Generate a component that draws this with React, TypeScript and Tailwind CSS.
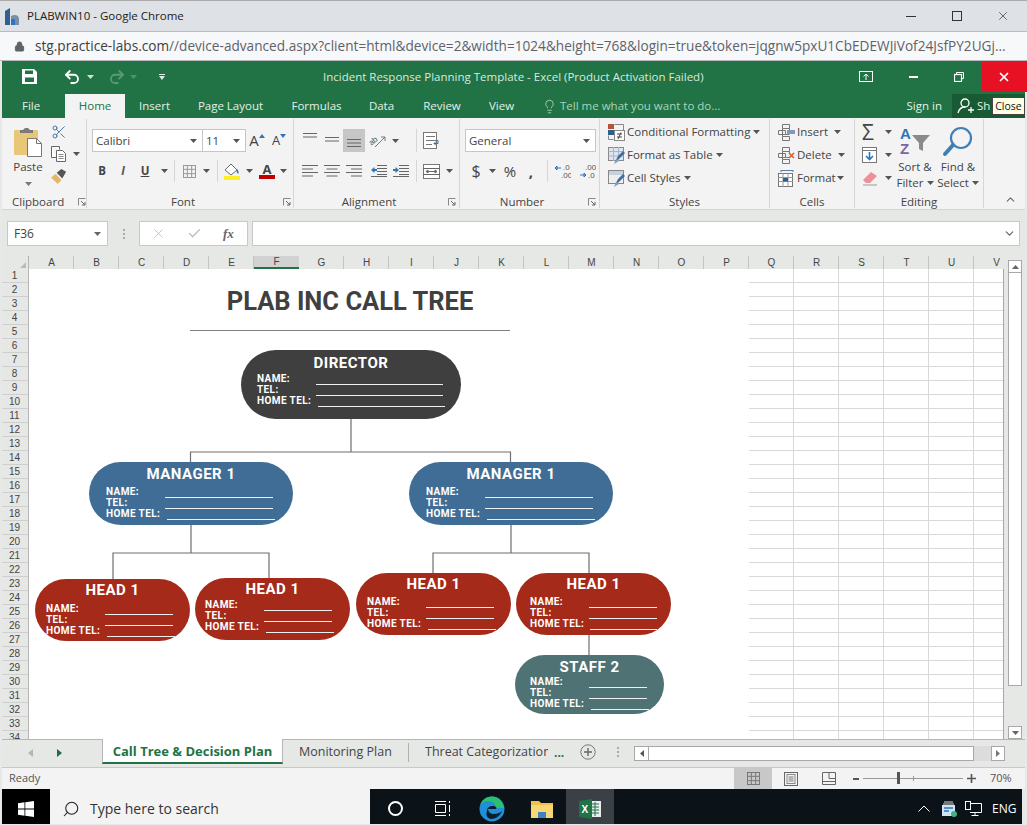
import React from "react";
import { Lock, Undo2, Redo2, Scissors, Lightbulb, Search, ChevronUp, ChevronDown, Check, X } from "lucide-react";

const Caret = ({ c = "#555" }: { c?: string }) => (
  <svg width="7" height="4" viewBox="0 0 7 4" className="shrink-0"><path d="M0 0h7L3.5 4z" fill={c} /></svg>
);

const Launcher = () => (
  <svg width="8" height="8" viewBox="0 0 8 8" className="shrink-0 ml-[4px]"><path d="M.5 7.5v-7h7" fill="none" stroke="#888" /><path d="M3 3l4 4M7 4v3H4" fill="none" stroke="#666" /></svg>
);

const Lines = ({ ws, x = "l" }: { ws: number[]; x?: string }) => (
  <svg width="16" height="14" viewBox="0 0 16 14">
    {ws.map((w, i) => {
      const y = 1.5 + i * 3.5;
      const x0 = x === "r" ? 16 - w : x === "c" ? (16 - w) / 2 : 0;
      return <path key={i} d={`M${x0} ${y}h${w}`} stroke="#666" />;
    })}
  </svg>
);

const Indent = ({ dir }: { dir: number }) => (
  <svg width="16" height="14" viewBox="0 0 16 14">
    <path d="M6 1.5h10M6 4.5h10M6 7.5h10M0 12.5h16M6 10.5h10" stroke="#666" />
    <path d={dir < 0 ? "M0 6l3.5-3v2H6v2H3.5v2z" : "M6 6L2.5 3v2H0v2h2.5v2z"} fill="#2f75b5" />
  </svg>
);

function Grid9({ s = 15, c = "#888" }: { s?: number; c?: string }) {
  const t = s / 3;
  return (
    <svg width={s} height={s} viewBox={`0 0 ${s} ${s}`}>
      <rect x=".5" y=".5" width={s - 1} height={s - 1} fill="none" stroke={c} />
      <path d={`M${t} 0V${s}M${2 * t} 0V${s}M0 ${t}H${s}M0 ${2 * t}H${s}`} stroke={c} />
    </svg>
  );
}

const StyleIcon = ({ kind }: { kind: number }) => (
  <svg width="17" height="17" viewBox="0 0 17 17" className="shrink-0">
    {kind === 0 ? (
      <>
        <rect x="0" y="0" width="6" height="5" fill="#b5533c" />
        <rect x="0" y="6" width="6" height="5" fill="#2f5f8f" />
        <path d="M6.5.5h9v6M.5 11.5v4h5" fill="none" stroke="#888" />
        <rect x="6.5" y="6.5" width="10" height="10" fill="#fff" stroke="#888" />
        <path d="M9 10h5M9 13h5M13 8.5l-3 6.5" stroke="#444" fill="none" />
      </>
    ) : (
      <>
        <rect x=".5" y=".5" width="15" height="13" fill={kind === 1 ? "#dfe5ee" : "#eee"} stroke="#888" />
        {kind === 1 && <path d="M.5 4.5h15M.5 9h15M5.5 0v14M10.5 0v14" stroke="#a9b4c4" />}
        {kind === 2 && <rect x="1" y="1" width="14" height="4" fill="#c6d0de" />}
        <path d="M7 15l3-6 5-5 2 2-5 5z" fill="#3f6f9f" />
        <path d="M6 17l2-5 3 2z" fill="#7ba3c7" />
      </>
    )}
  </svg>
);

const CellIcon = ({ kind }: { kind: number }) => (
  <svg width="18" height="17" viewBox="0 0 18 17" className="shrink-0">
    {kind === 2 ? (
      <>
        <path d="M3 .5h12M3 0v2M15 0v2" stroke="#5a7fa8" />
        <rect x=".5" y="3.5" width="14" height="13" fill="#fff" stroke="#777" />
        <path d="M.5 7.5h14M.5 11.5h14M5 3v14M10 3v14" stroke="#999" />
        <rect x="5" y="8" width="5" height="3.5" fill="#2f5f8f" />
      </>
    ) : (
      <>
        <path d="M4.5.5h7v4h-7zM.5 6.5h7v4h-7zM4.5 12.5h7v4h-7zM4.5 4.5v8M11.5 4.5v2M7.5 10.5h4" fill="none" stroke="#777" />
        {kind === 0 ? (
          <path d="M9 7h8M9 9h8" stroke="#5a7fa8" strokeWidth="1.5" />
        ) : (
          <path d="M11 6l5 5M16 6l-5 5" stroke="#d9622b" strokeWidth="1.7" />
        )}
      </>
    )}
  </svg>
);

function Ribbon() {
  return (
    <div className="flex h-[92px] bg-[#f3f3f3] border-b border-[#d4d4d4] text-[11.5px] text-[#444] whitespace-nowrap shrink-0">
      {/* Clipboard */}
      <div className="flex flex-col w-[85px] border-r border-[#d6d6d6] my-[1px]">
        <div className="flex h-[76px]">
          <div className="w-[49px] flex flex-col items-center pt-[8px] pl-[3px]">
            <svg width="30" height="30" viewBox="0 0 30 30">
              <rect x="1" y="3" width="24" height="25" rx="1" fill="#e8c878" />
              <path d="M7 6V3h3l2-2h3l2 2h3v3z" fill="#7a7a7a" />
              <path d="M14.5 11.5h9l5 5v13h-14z" fill="#fff" stroke="#777" />
              <path d="M23.5 11.5v5h5" fill="none" stroke="#777" />
            </svg>
            <span className="mt-[2px] leading-[16px]">Paste</span>
            <div className="mt-[7px]"><Caret c="#777" /></div>
          </div>
          <div className="flex flex-col items-start pt-[5px]">
            <Scissors size={16} color="#3f6f9f" strokeWidth={1.4} />
            <div className="flex items-center gap-[6px] h-[18px] mt-[5px]">
              <svg width="16" height="16" viewBox="0 0 16 16"><path d="M.5.5h8v3M.5.5v11h5" fill="#fff" stroke="#666" /><path d="M5.5 4.5h6l3 3v8h-9z" fill="#fff" stroke="#666" /><path d="M7.5 8.5h5M7.5 10.5h5M7.5 12.5h5" stroke="#888" /></svg>
              <Caret />
            </div>
            <div className="mt-[6px]">
              <svg width="17" height="15" viewBox="0 0 18 16"><path d="M0 9l5-4 6 7-4 4z" fill="#e5b56a" /><path d="M6 4l5-4 5 3-4 7z" fill="#555" /></svg>
            </div>
          </div>
        </div>
        <div className="flex items-center h-[13px] pl-[10px]">
          <span className="w-[63px]">Clipboard</span>
          <Launcher />
        </div>
      </div>

      {/* Font */}
      <div className="flex flex-col w-[207px] border-r border-[#d6d6d6] my-[1px]">
        <div className="flex h-[76px] flex-col pl-[5px] pt-[10px]">
          <div className="flex items-center h-[23px]">
            <div className="w-[111px] h-[23px] flex items-center justify-between px-[3px] pr-[5px] bg-white border border-[#c6c6c6]"><span>Calibri</span><Caret /></div>
            <div className="w-[43px] h-[23px] flex items-center justify-between px-[3px] pr-[5px] bg-white border border-l-0 border-[#c6c6c6]"><span>11</span><Caret /></div>
            <div className="w-[22px] flex justify-center items-center text-[15px] leading-none">A<svg width="6" height="4" viewBox="0 0 6 4" className="mb-[10px]"><path d="M0 4l3-4 3 4z" fill="#2f75b5" /></svg></div>
            <div className="w-[22px] flex justify-center items-center text-[13px] leading-none">A<svg width="6" height="4" viewBox="0 0 6 4" className="mb-[10px]"><path d="M0 0l3 4 3-4z" fill="#2f75b5" /></svg></div>
          </div>
          <div className="flex items-center h-[22px] mt-[8px]">
            <div className="w-[20px] text-center font-bold">B</div>
            <div className="w-[22px] text-center italic font-bold text-[#555]">I</div>
            <div className="w-[22px] text-center font-bold underline">U</div>
            <div className="w-[14px] flex justify-center ml-[1px]"><Caret /></div>
            <div className="w-px h-[22px] bg-[#d6d6d6] ml-[3px]" />
            <div className="w-[28px] flex justify-center"><Grid9 s={13} c="#999" /></div>
            <div className="w-[6px] flex justify-center"><Caret /></div>
            <div className="w-px h-[22px] bg-[#d6d6d6] ml-[8px]" />
            <div className="w-[28px] flex justify-center">
              <svg width="18" height="18" viewBox="0 0 18 18"><path d="M2 8l6-6 6 6-6 5z" fill="#fff" stroke="#666" /><path d="M14 7c2 2 2 4 1 5-1-1-2-3-1-5z" fill="#2f75b5" /><rect x="1" y="14" width="16" height="4" fill="#ffee22" /></svg>
            </div>
            <div className="w-[6px] flex justify-center"><Caret /></div>
            <div className="w-[26px] flex flex-col items-center ml-[2px]">
              <span className="font-bold text-[13px] leading-[12px]">A</span>
              <div className="w-[16px] h-[4px] bg-[#c00000]" />
            </div>
            <div className="w-[6px] flex justify-center"><Caret /></div>
          </div>
        </div>
        <div className="flex items-center h-[13px]">
          <span className="w-[192px] text-center">Font</span>
          <Launcher />
        </div>
      </div>

      {/* Alignment */}
      <div className="flex flex-col w-[166px] border-r border-[#d6d6d6] my-[1px]">
        <div className="flex h-[76px] flex-col pl-[5px] pt-[10px]">
          <div className="flex items-center h-[23px]">
            <div className="w-[22px] flex justify-center pb-[4px]"><Lines ws={[14, 14]} x="c" /></div>
            <div className="w-[22px] flex justify-center pt-[4px]"><Lines ws={[14, 14]} x="c" /></div>
            <div className="w-[22px] h-[23px] flex justify-center items-end bg-[#c6c6c6]"><Lines ws={[14, 14, 14]} x="c" /></div>
            <div className="w-[26px] flex justify-center">
              <svg width="18" height="15" viewBox="0 0 18 15"><text x="0" y="10" fontSize="8" fill="#555" transform="rotate(-40 5 8)" fontFamily="Liberation Sans">ab</text><path d="M6 14L16 4M16 4l-4 0M16 4v4" stroke="#777" fill="none" /></svg>
            </div>
            <div className="w-[8px] flex justify-center"><Caret /></div>
            <div className="w-px h-[23px] bg-[#d6d6d6] ml-[17px]" />
            <div className="w-[29px] flex justify-center">
              <svg width="17" height="17" viewBox="0 0 17 17"><rect x=".5" y=".5" width="13" height="16" fill="#fff" stroke="#777" /><path d="M3 4.5h9M3 8.5h12M3 12.5h6" stroke="#777" /><path d="M15 8.5v3h-4M13 9.5l-2 2 2 2" stroke="#2f75b5" fill="none" /></svg>
            </div>
          </div>
          <div className="flex items-center h-[22px] mt-[8px]">
            <div className="w-[22px] flex justify-center"><Lines ws={[16, 11, 16, 11]} x="l" /></div>
            <div className="w-[22px] flex justify-center"><Lines ws={[16, 11, 16, 11]} x="c" /></div>
            <div className="w-[22px] flex justify-center"><Lines ws={[16, 11, 16, 11]} x="r" /></div>
            <div className="w-[22px] flex justify-center ml-[3px]"><Indent dir={-1} /></div>
            <div className="w-[22px] flex justify-center"><Indent dir={1} /></div>
            <div className="w-px h-[22px] bg-[#d6d6d6] ml-[4px]" />
            <div className="w-[29px] flex justify-center">
              <svg width="17" height="15" viewBox="0 0 17 15"><rect x=".5" y=".5" width="16" height="14" fill="#fff" stroke="#777" /><path d="M0 4.5h17M0 10.5h17M3 7.5h11M3 7.5l2-1.5v3zM14 7.5l-2-1.5v3z" stroke="#666" fill="none" /></svg>
            </div>
            <Caret />
          </div>
        </div>
        <div className="flex items-center h-[13px]">
          <span className="w-[150px] text-center">Alignment</span>
          <Launcher />
        </div>
      </div>

      {/* Number */}
      <div className="flex flex-col w-[140px] border-r border-[#d6d6d6] my-[1px]">
        <div className="flex h-[76px] flex-col pl-[5px] pt-[10px]">
          <div className="w-[131px] h-[23px] flex items-center justify-between px-[3px] pr-[5px] bg-white border border-[#c6c6c6]"><span>General</span><Caret /></div>
          <div className="flex items-center h-[22px] mt-[8px]">
            <div className="w-[22px] text-center text-[16px] leading-none">$</div>
            <div className="w-[8px] flex justify-center ml-[1px]"><Caret /></div>
            <div className="w-[28px] text-center text-[15px] leading-none font-medium">%</div>
            <div className="w-[14px] text-center font-bold text-[15px] leading-none">,</div>
            <div className="w-px h-[22px] bg-[#d6d6d6] ml-[9px]" />
            <div className="w-[30px] flex justify-center">
              <svg width="16" height="16" viewBox="0 0 16 16"><text x="8" y="7" fontSize="8" fill="#555" fontFamily="Liberation Sans">.0</text><text x="6" y="15" fontSize="8" fill="#555" fontFamily="Liberation Sans">.00</text><path d="M0 5h6M0 5l2-2v4z" stroke="#2f75b5" fill="none" /></svg>
            </div>
            <div className="w-[20px] flex justify-center">
              <svg width="16" height="16" viewBox="0 0 16 16"><text x="5" y="7" fontSize="8" fill="#555" fontFamily="Liberation Sans">.00</text><text x="8" y="15" fontSize="8" fill="#555" fontFamily="Liberation Sans">.0</text><path d="M0 12h6M6 12l-2-2v4z" stroke="#2f75b5" fill="none" /></svg>
            </div>
          </div>
        </div>
        <div className="flex items-center h-[13px]">
          <span className="w-[124px] text-center">Number</span>
          <Launcher />
        </div>
      </div>

      {/* Styles */}
      <div className="flex flex-col w-[170px] border-r border-[#d6d6d6] my-[1px]">
        <div className="flex h-[76px] flex-col pl-[8px] pt-[4px] gap-[5px]">
          <div className="flex items-center h-[18px] gap-[2px]"><StyleIcon kind={0} /><span className="mr-[1px]">Conditional Formatting</span><Caret /></div>
          <div className="flex items-center h-[18px] gap-[2px]"><StyleIcon kind={1} /><span className="mr-[1px]">Format as Table</span><Caret /></div>
          <div className="flex items-center h-[18px] gap-[2px]"><StyleIcon kind={2} /><span className="mr-[1px]">Cell Styles</span><Caret /></div>
        </div>
        <div className="h-[13px] flex items-center justify-center">Styles</div>
      </div>

      {/* Cells */}
      <div className="flex flex-col w-[85px] border-r border-[#d6d6d6] my-[1px]">
        <div className="flex h-[76px] flex-col pl-[8px] pt-[4px] gap-[5px]">
          <div className="flex items-center h-[18px]"><CellIcon kind={0} /><span className="ml-[1px] w-[37px]">Insert</span><Caret /></div>
          <div className="flex items-center h-[18px]"><CellIcon kind={1} /><span className="ml-[1px] w-[41px]">Delete</span><Caret /></div>
          <div className="flex items-center h-[18px]"><CellIcon kind={2} /><span className="ml-[1px] w-[40px]">Format</span><Caret /></div>
        </div>
        <div className="h-[13px] flex items-center justify-center">Cells</div>
      </div>

      {/* Editing */}
      <div className="flex flex-col w-[129px] border-r border-[#d6d6d6] my-[1px]">
        <div className="flex h-[76px] pl-[7px]">
          <div className="flex flex-col pt-[4px] gap-[5px] w-[35px] shrink-0">
            <div className="flex items-center h-[18px] gap-[6px]"><span className="text-[21px] leading-none w-[17px] text-[#444]">Σ</span><Caret /></div>
            <div className="flex items-center h-[18px] gap-[6px]">
              <svg width="17" height="17" viewBox="0 0 17 17"><rect x=".5" y=".5" width="14" height="15" fill="#fff" stroke="#777" /><path d="M0 3.5h15" stroke="#777" /><path d="M7.5 5v7M4 9l3.5 3.5L11 9" stroke="#2f75b5" strokeWidth="1.6" fill="none" /></svg>
              <Caret />
            </div>
            <div className="flex items-center h-[18px] gap-[6px]">
              <svg width="17" height="16" viewBox="0 0 17 16"><path d="M1 10l8-8 6 4-7 7H4z" fill="#ee8f9a" /><path d="M1 15h14" stroke="#999" /></svg>
              <Caret />
            </div>
          </div>
          <div className="w-[36px] shrink-0 flex flex-col items-center pt-[7px]">
            <svg width="32" height="32" viewBox="0 0 32 32">
              <text x="1" y="13" fontSize="15" fontWeight="700" fill="#2f75b5" fontFamily="Liberation Sans">A</text>
              <text x="1" y="28" fontSize="15" fontWeight="700" fill="#8064a2" fontFamily="Liberation Sans">Z</text>
              <path d="M13 9h18l-7 8v8l-4-2v-6z" fill="#8a8a8a" />
            </svg>
            <span className="leading-[16px] mt-[1px]">Sort &amp;</span>
            <span className="leading-[16px] flex items-center gap-[3px]">Filter<Caret /></span>
          </div>
          <div className="w-[50px] shrink-0 flex flex-col items-center pt-[6px]">
            <svg width="32" height="34" viewBox="0 0 32 34">
              <circle cx="19" cy="13" r="10" fill="none" stroke="#3f7fb5" strokeWidth="2.2" />
              <path d="M11 20L3 29" stroke="#3f7fb5" strokeWidth="4" strokeLinecap="round" />
            </svg>
            <span className="leading-[16px]">Find &amp;</span>
            <span className="leading-[16px] flex items-center gap-[3px]">Select<Caret /></span>
          </div>
        </div>
        <div className="h-[13px] flex items-center justify-center">Editing</div>
      </div>
      <div className="flex-1 flex items-end justify-end pb-[3px] pr-[8px]"><ChevronUp size={13} color="#666" strokeWidth={2} /></div>
    </div>
  );
}

function FormulaBar() {
  return (
    <div className="flex h-[46px] bg-[#e6e8e6] items-start pt-[11px] pl-[5px] text-[12px] text-[#444] shrink-0">
      <div className="w-[101px] h-[25px] bg-white border border-[#c8c8c8] flex items-center justify-between pl-[6px] pr-[6px]"><span>F36</span><Caret c="#666" /></div>
      <div className="w-[31px] h-[25px] flex flex-col items-center justify-center gap-[2px]">
        <div className="w-[2px] h-[2px] bg-[#aaa]" /><div className="w-[2px] h-[2px] bg-[#aaa]" /><div className="w-[2px] h-[2px] bg-[#aaa]" />
      </div>
      <div className="w-[109px] h-[25px] bg-white border border-[#c8c8c8] flex items-center pl-[11px]">
        <X size={15} color="#c4c4c4" strokeWidth={1.6} />
        <Check size={15} color="#c4c4c4" strokeWidth={2.4} className="ml-[21px]" />
        <span className="ml-[21px] italic font-bold text-[13px] text-[#666] font-['Liberation_Serif',serif]">fx</span>
      </div>
      <div className="w-[768px] ml-[4px] h-[25px] bg-white border border-[#c8c8c8] flex items-center justify-end pr-[3px]"><ChevronDown size={13} color="#666" strokeWidth={2.2} /></div>
    </div>
  );
}

const COLS = "ABCDEFGHIJKLMNOPQRSTUV".split("");

function ColHeaders() {
  return (
    <div className="flex h-[13px] bg-[#e6e8e6] text-[10px] leading-[13px] text-[#444] font-['Liberation_Sans',sans-serif] overflow-hidden">
      <div className="w-[27px] shrink-0 border-r border-[#b5b5b5] flex justify-end items-end pr-[2px] pb-[1px]">
        <svg width="6" height="6" viewBox="0 0 6 6"><path d="M6 0v6H0z" fill="#bbb" /></svg>
      </div>
      {COLS.map((c) => (
        <div key={c} className={c === "F" ? "w-[45px] shrink-0 text-center bg-[#d2d2d2] border-b-2 border-[#217346] leading-[11px]" : "w-[45px] shrink-0 text-center pl-px border-r border-[#c4c4c4]"}>{c}</div>
      ))}
    </div>
  );
}

type NodeProps = { cls: string; title: string; line: string; titleCls: string };

function Node({ cls, title, line, titleCls }: NodeProps) {
  const rows = ["NAME:", "TEL:", "HOME TEL:"];
  return (
    <div className={`absolute rounded-full text-white font-['Roboto',sans-serif] font-bold flex flex-col ${cls}`}>
      <div className={`text-center text-[15px] leading-[18px] tracking-[0.5px] ${titleCls}`}>{title}</div>
      <div className="flex flex-col">
        {rows.map((r, i) => (
          <div key={r} className="flex items-end h-[11px] text-[10px] leading-[11px] tracking-[0.4px]">
            <span className="w-[59px] whitespace-nowrap">{r}</span>
            <div className={`${line} h-[2px] border-b border-[#f0f0f0] mb-[-1px] ${i === 2 ? "ml-[2px]" : ""}`} />
          </div>
        ))}
      </div>
    </div>
  );
}

function Diagram() {
  return (
    <div className="relative w-[720px] h-[470px] bg-white shrink-0">
      <div className="absolute left-[161px] top-[17px] w-[320px] flex flex-col items-center font-['Roboto',sans-serif]">
        <div className="text-[25.5px] leading-[30px] font-bold text-[#404040] whitespace-nowrap">PLAB INC CALL TREE</div>
        <div className="w-[320px] h-[1px] bg-[#808080] mt-[14px]" />
      </div>
      <svg className="absolute left-0 top-0" width="720" height="470" viewBox="0 0 720 470" fill="none" stroke="#6f6f6f" strokeWidth="1.2">
        <path d="M322 150v33M161.500 193v-10h320v10" />
        <path d="M162 256v28M84 310v-26h156v25" />
        <path d="M482 256v28M404 304v-20h156v20" />
        <path d="M560 366v20" />
      </svg>
      <Node cls="left-[212px] top-[81px] w-[220px] h-[69px] bg-[#3f3f3f] px-[16px] pt-[4px]" title="DIRECTOR" titleCls="mb-[1px]" line="w-[127px]" />
      <Node cls="left-[60px] top-[193px] w-[204px] h-[63px] bg-[#3f6d96] px-[17px] pt-[3px]" title="MANAGER 1" titleCls="mb-[3px]" line="w-[108px]" />
      <Node cls="left-[380px] top-[193px] w-[204px] h-[63px] bg-[#3f6d96] px-[17px] pt-[3px]" title="MANAGER 1" titleCls="mb-[3px]" line="w-[108px]" />
      <Node cls="left-[6px] top-[310px] w-[155px] h-[62px] bg-[#a52a1a] px-[11px] pt-[2px]" title="HEAD 1" titleCls="mb-[4px]" line="w-[68px]" />
      <Node cls="left-[166px] top-[309px] w-[155px] h-[62px] bg-[#a52a1a] px-[10px] pt-[2px]" title="HEAD 1" titleCls="mb-[1px]" line="w-[68px]" />
      <Node cls="left-[327px] top-[304px] w-[155px] h-[62px] bg-[#a52a1a] px-[11px] pt-[2px]" title="HEAD 1" titleCls="mb-[3px]" line="w-[68px]" />
      <Node cls="left-[487px] top-[304px] w-[155px] h-[62px] bg-[#a52a1a] px-[14px] pt-[2px]" title="HEAD 1" titleCls="mb-[3px]" line="w-[68px]" />
      <Node cls="left-[486px] top-[386px] w-[149px] h-[59px] bg-[#4f7274] px-[15px] pt-[3px]" title="STAFF 2" titleCls="" line="w-[58px]" />
    </div>
  );
}

function Sheet() {
  const rows = Array.from({ length: 34 }, (_, i) => i + 1);
  return (
    <div className="flex h-[470px] overflow-hidden">
      <div className="w-[27px] shrink-0 bg-[#e6e8e6] border-r border-[#b5b5b5] overflow-hidden font-['Liberation_Sans',sans-serif] text-[10px] text-[#444]">
        {rows.map((r) => (
          <div key={r} className="h-[14px] leading-[14px] pr-[1px] text-center border-b border-[#cfcfcf]">{r}</div>
        ))}
      </div>
      <Diagram />
      <div className="w-[255px] shrink-0 bg-white border-r border-[#a8a8a8] bg-[repeating-linear-gradient(to_right,transparent_0,transparent_44px,#d9d9d9_44px,#d9d9d9_45px),repeating-linear-gradient(to_bottom,transparent_0,transparent_13px,#d9d9d9_13px,#d9d9d9_14px)]" />
    </div>
  );
}

function VScroll() {
  return (
    <div className="w-[21px] shrink-0 flex flex-col bg-[#e6e8e6] pl-[4px] pt-[4px]">
      <div className="h-[13px] w-[14px] bg-white border border-[#a8a8a8] flex items-center justify-center"><svg width="7" height="4" viewBox="0 0 7 4"><path d="M0 4h7L3.5 0z" fill="#666" /></svg></div>
      <div className="h-[413px] w-[14px] bg-white border border-t-0 border-[#a8a8a8]" />
      <div className="flex-1 w-[14px]" />
      <div className="h-[13px] w-[14px] bg-white border border-[#a8a8a8] flex items-center justify-center"><Caret c="#666" /></div>
    </div>
  );
}

function SheetTabs() {
  return (
    <div className="flex h-[28px] bg-[#e6e8e6] border-t border-[#b5b5b5] text-[12.5px] text-[#444] whitespace-nowrap shrink-0">
      <div className="w-[100px] flex items-center pl-[26px] pb-[2px] shrink-0">
        <svg width="5" height="8" viewBox="0 0 5 8"><path d="M5 0v8L0 4z" fill="#b5b5b5" /></svg>
        <svg width="5" height="8" viewBox="0 0 5 8" className="ml-[24px]"><path d="M0 0v8l5-4z" fill="#1f6b46" /></svg>
      </div>
      <div className="w-[181px] h-[25px] mt-[-1px] pt-[3px] bg-white border-x border-[#b5b5b5] border-b-[2.5px] border-b-[#217346] flex items-center justify-center font-bold text-[13px] text-[#217346] shrink-0">Call Tree &amp; Decision Plan</div>
      <div className="flex items-center h-[25px] ml-[16px] w-[93px]">Monitoring Plan</div>
      <div className="w-px h-[19px] bg-[#b0b0b0] ml-[16px] mt-[3px]" />
      <div className="flex items-center h-[25px] ml-[16px] w-[123px] overflow-hidden">Threat Categorization</div>
      <div className="h-[25px] flex items-center ml-[6px] text-[#217346] font-bold text-[12px] leading-none w-[20px]">...</div>
      <div className="h-[24px] flex items-center ml-[6px]">
        <svg width="16" height="16" viewBox="0 0 16 16"><circle cx="8" cy="8" r="7.2" fill="none" stroke="#777" /><path d="M8 4v8M4 8h8" stroke="#666" strokeWidth="1.4" /></svg>
      </div>
      <div className="w-[3px] h-[24px] flex flex-col items-center justify-center gap-[2px] ml-[20px]">
        <div className="w-[2px] h-[2px] bg-[#aaa]" /><div className="w-[2px] h-[2px] bg-[#aaa]" /><div className="w-[2px] h-[2px] bg-[#aaa]" />
      </div>
      <div className="flex h-[15px] mt-[6px] ml-[15px] w-[371px]">
        <div className="w-[15px] bg-white border border-[#a8a8a8] flex items-center justify-center"><svg width="4" height="7" viewBox="0 0 4 7"><path d="M4 0v7L0 3.500z" fill="#555" /></svg></div>
        <div className="w-[325px] bg-white border-y border-r border-[#a8a8a8]" />
        <div className="flex-1 bg-[#dcdcdc]" />
        <div className="w-[14px] bg-white border border-[#a8a8a8] flex items-center justify-center"><svg width="4" height="7" viewBox="0 0 4 7"><path d="M0 0v7l4-3.500z" fill="#777" /></svg></div>
      </div>
    </div>
  );
}

function StatusBar() {
  return (
    <div className="flex items-center h-[22px] bg-[#f3f3f3] border-t border-[#c8c8c8] text-[11px] text-[#555] shrink-0">
      <span className="ml-[7px]">Ready</span>
      <div className="ml-auto flex items-center h-[22px]">
        <div className="w-[38px] h-[22px] bg-[#c8c8c8] flex items-center justify-center"><Grid9 s={13} c="#777" /></div>
        <div className="w-[38px] flex justify-center">
          <svg width="14" height="14" viewBox="0 0 14 14"><rect x=".5" y=".5" width="13" height="13" fill="none" stroke="#666" /><rect x="3" y="2.500" width="8" height="9" fill="none" stroke="#888" /><path d="M4.500 5h5M4.500 7h5M4.500 9h5" stroke="#777" /></svg>
        </div>
        <div className="w-[38px] flex justify-center">
          <svg width="14" height="13" viewBox="0 0 14 13"><path d="M.5 .5h13v12H.5zM.5 9.500h13M7 .5v6h6.500" fill="none" stroke="#666" /></svg>
        </div>
        <div className="flex items-center ml-[5px]">
          <div className="w-[6px] h-[2px] bg-[#555]" />
          <div className="relative w-[100px] h-px bg-[#999] ml-[4px]">
            <div className="absolute left-[34px] top-[-6px] w-[3px] h-[12px] bg-[#555]" />
            <div className="absolute left-[50px] top-[-2px] w-px h-[5px] bg-[#999]" />
          </div>
          <svg width="9" height="9" viewBox="0 0 9 9" className="ml-[4px]"><path d="M4.500 0v9M0 4.500h9" stroke="#555" strokeWidth="1.6" /></svg>
        </div>
        <span className="ml-[14px] mr-[13px] w-[22px]">70%</span>
      </div>
    </div>
  );
}

function Taskbar() {
  return (
    <div className="flex h-[35px] bg-[#0b1218] text-white mr-[3px] shrink-0">
      <div className="w-[48px] h-full bg-[#000000] flex items-center justify-center pt-[4px]">
        <svg width="16" height="16" viewBox="0 0 16 16" fill="#fff"><path d="M0 2.200l6.500-.9v6.300H0zM7.300 1.200L16 0v7.600H7.300zM0 8.400h6.500v6.300L0 13.800zM7.300 8.400H16V16l-8.700-1.200z" /></svg>
      </div>
      <div className="w-[320px] h-full bg-[#f3f3f3] flex items-center pt-[4px] pl-[12px] text-[#333] text-[14px]">
        <Search size={18} color="#222" strokeWidth={1.4} className="-scale-x-100" />
        <span className="ml-[10px]">Type here to search</span>
      </div>
      <div className="w-[48px] ml-[1px] flex items-center justify-center pt-[4px]"><div className="w-[15px] h-[15px] rounded-full border-[2.5px] border-white" /></div>
      <div className="w-[48px] flex items-center justify-center pt-[4px]">
        <svg width="16" height="15" viewBox="0 0 16 15" fill="none" stroke="#fff"><path d="M0 .5h11M0 14.500h11M.5 3.500h10v8H.5zM14.500 0v2M14.500 4v7M14.500 13v2" /></svg>
      </div>
      <div className="w-[50px] flex items-center justify-center pt-[4px]">
        <svg width="26" height="26" viewBox="0 0 26 26">
          <circle cx="13" cy="13" r="12.500" fill="#1f8fd8" />
          <path d="M25 12C24 5 19 .5 13 .5 7 .5 3 4 1 9c3-4 8-5 12-3 3 1 4 4 3 6z" fill="#2bc06c" />
          <path d="M8 15c0-3 2-5 6-5 3 0 4 2 3 3H9c0 3 3 5 6 5 3 0 6-1 8-3-2 5-6 8-11 8-5-1-5-5-4-8z" fill="#0b1218" opacity=".9" />
        </svg>
      </div>
      <div className="w-[49px] flex items-center justify-center pt-[4px]">
        <svg width="22" height="19" viewBox="0 0 22 19"><path d="M0 2h8l2 2h12v15H0z" fill="#f0c14b" /><path d="M0 6h22v13H0z" fill="#f7d774" /><rect x="7" y="13" width="8" height="6" fill="#3d82c4" /></svg>
      </div>
      <div className="w-[48px] h-full bg-[#3a4046] flex items-center justify-center pt-[4px]">
        <svg width="23" height="20" viewBox="0 0 23 20">
          <path d="M10 2h12v16H10z" fill="#fff" opacity=".9" />
          <path d="M12 5h8M12 8h8M12 11h8M12 14h8M16 3v14" stroke="#1f7346" />
          <path d="M0 2l13-2v20L0 18z" fill="#1f7346" />
          <text x="2.500" y="14" fontSize="10" fontWeight="700" fill="#fff" fontFamily="Liberation Sans">X</text>
        </svg>
      </div>
      <div className="ml-auto flex items-center pt-[4px]">
        <svg width="12" height="7" viewBox="0 0 12 7" fill="none" stroke="#fff"><path d="M.5 6.500L6 1l5.500 5.500" /></svg>
        <svg width="16" height="16" viewBox="0 0 16 16" className="ml-[11px]"><rect x="1" y="4" width="13" height="11" fill="#cfe3f5" /><path d="M3 1h9M2 3h11" stroke="#ddd" /><path d="M3 7h9M3 10h5" stroke="#2f75b5" strokeWidth="1.6" /><circle cx="13" cy="13" r="3" fill="#3fb27f" /></svg>
        <svg width="17" height="15" viewBox="0 0 17 15" fill="none" stroke="#fff" className="ml-[8px]"><path d="M5 2.500h11.500v9H5M10 11.500v3M6.500 14.500h7" /><rect x=".5" y=".5" width="5" height="8" /></svg>
        <span className="ml-[10px] mr-[8px] text-[12px] w-[22px] whitespace-nowrap">ENG</span>
      </div>
    </div>
  );
}

export default function App() {
  return (
    <div className="w-[1027px] h-[825px] overflow-hidden flex flex-col bg-[#e8e8e8] font-['Open_Sans',sans-serif]">
      {/* Chrome title */}
      <div className="h-[31px] flex items-center bg-[#dee1e6] border-t border-[#aaa] text-[11.5px] text-[#222] shrink-0">
        <svg width="16" height="17" viewBox="0 0 16 17" className="ml-[5px]"><path d="M0 3l5-3v17H0z" fill="#2f5f8f" /><path d="M6 8c4-2 8-1 8 3v6h-4v-6H6z" fill="#7a8ea8" /><path d="M6 11h4v6H6z" fill="#2f74c0" /></svg>
        <span className="ml-[6px]">PLABWIN10 - Google Chrome</span>
        <div className="ml-auto flex items-center">
          <div className="w-[46px] flex justify-center"><div className="w-[10px] h-px bg-[#333]" /></div>
          <div className="w-[46px] flex justify-center"><div className="w-[10px] h-[10px] border border-[#333]" /></div>
          <div className="w-[46px] flex justify-center mr-[1px]"><X size={14} color="#333" strokeWidth={1.2} /></div>
        </div>
      </div>
      {/* Address */}
      <div className="h-[30px] flex items-center bg-[#f7f8fa] border-y border-[#b9bbbe] shrink-0 text-[13.6px] text-[#3c4043]">
        <Lock size={11} color="#5f6368" fill="#5f6368" strokeWidth={2} className="ml-[14px] shrink-0" />
        <span className="ml-[10px] whitespace-nowrap tracking-[0.02px]">stg.practice-labs.com<span className="text-[#5f6368]">//device-advanced.aspx?client=html&amp;device=2&amp;width=1024&amp;height=768&amp;login=true&amp;token=jqgnw5pxU1CbEDEWJiVof24JsfPY2UGj...</span></span>
      </div>
      <div className="flex-1 flex flex-col ml-[2px] mr-[2px]">
        {/* Excel title */}
        <div className="h-[31px] flex items-center bg-[#217346] text-[#d7eadf] shrink-0">
          <svg width="15" height="15" viewBox="0 0 15 15" className="ml-[20px] shrink-0"><path d="M0 0h12l3 3v12H0z" fill="#fff" /><rect x="3" y="1.500" width="8" height="3.500" fill="#217346" /><rect x="3" y="8.500" width="9" height="4.500" fill="#217346" /></svg>
          <Undo2 size={18} color="#fff" strokeWidth={2.4} className="ml-[26px] shrink-0" />
          <div className="ml-[6px]"><Caret c="#cfe3d7" /></div>
          <Redo2 size={18} color="#5a9a78" strokeWidth={2.4} className="ml-[14px] shrink-0" />
          <div className="ml-[4px]"><Caret c="#4f9270" /></div>
          <svg width="6" height="6" viewBox="0 0 6 6" className="ml-[22px] shrink-0"><path d="M0 2h6L3 6z" fill="#dcebe3" /><path d="M0 .5h6" stroke="#dcebe3" /></svg>
          <span className="ml-[158px] text-[11.5px] whitespace-nowrap">Incident Response Planning Template - Excel (Product Activation Failed)</span>
          <svg width="14" height="11" viewBox="0 0 14 11" fill="none" stroke="#fff" className="ml-[155px] shrink-0"><rect x=".5" y=".5" width="13" height="10" /><path d="M7 9V3M4.500 5.500L7 3l2.500 2.500" /></svg>
          <div className="w-[9px] h-[2px] bg-white ml-[36px] shrink-0" />
          <svg width="10" height="10" viewBox="0 0 10 10" fill="none" stroke="#fff" className="ml-[36px] shrink-0"><path d="M2.500 2.500V.5h7v6H7.500" /><rect x=".5" y="2.500" width="7" height="7" strokeWidth="1.200" /></svg>
          <div className="ml-[18px] w-[45px] h-[31px] bg-[#e81123] flex items-center justify-center shrink-0"><X size={14} color="#fff" strokeWidth={3} /></div>
        </div>
        {/* Tabs */}
        <div className="relative h-[26px] flex items-end bg-[#217346] text-[11.5px] text-[#e3f0e8] shrink-0 whitespace-nowrap">
          <div className="w-[63px] pl-[20px] h-[24px] leading-[24px]">File</div>
          <div className="w-[60px] h-[24px] leading-[24px] text-center bg-[#f3f3f3] text-[#217346]">Home</div>
          <div className="w-[59px] h-[24px] leading-[24px] text-center">Insert</div>
          <div className="w-[93px] h-[24px] leading-[24px] text-center">Page Layout</div>
          <div className="w-[79px] h-[24px] leading-[24px] text-center">Formulas</div>
          <div className="w-[51px] h-[24px] leading-[24px] text-center">Data</div>
          <div className="w-[70px] h-[24px] leading-[24px] text-center">Review</div>
          <div className="w-[49px] h-[24px] leading-[24px] text-center">View</div>
          <div className="h-[24px] flex items-center ml-[16px] text-[#a9d4bb]">
            <Lightbulb size={15} color="#a9d4bb" strokeWidth={1.4} />
            <span className="ml-[3px]">Tell me what you want to do...</span>
          </div>
          <div className="ml-auto h-[24px] leading-[24px] mr-[10px]">Sign in</div>
          <div className="w-[73px] h-[24px] bg-[#185a33] flex items-center pl-[5px]">
            <svg width="18" height="16" viewBox="0 0 18 16" fill="none" stroke="#fff" strokeWidth="1.300"><circle cx="8" cy="5" r="4" /><path d="M1 15c1-4 4-6 7-6M11 12h6M14 9v6" /></svg>
            <span className="ml-[2px]">Sh</span>
          </div>
          <div className="absolute right-0 top-[5px] w-[33px] h-[18px] bg-[#ffffe6] border border-[#444] text-[#111] text-[10.5px] leading-[16px] text-center">Close</div>
        </div>
        <Ribbon />
        <FormulaBar />
        <div className="flex shrink-0">
          <div className="w-[1002px] flex flex-col overflow-hidden">
            <ColHeaders />
            <Sheet />
          </div>
          <VScroll />
        </div>
        <SheetTabs />
        <StatusBar />
        <Taskbar />
      </div>
    </div>
  );
}
